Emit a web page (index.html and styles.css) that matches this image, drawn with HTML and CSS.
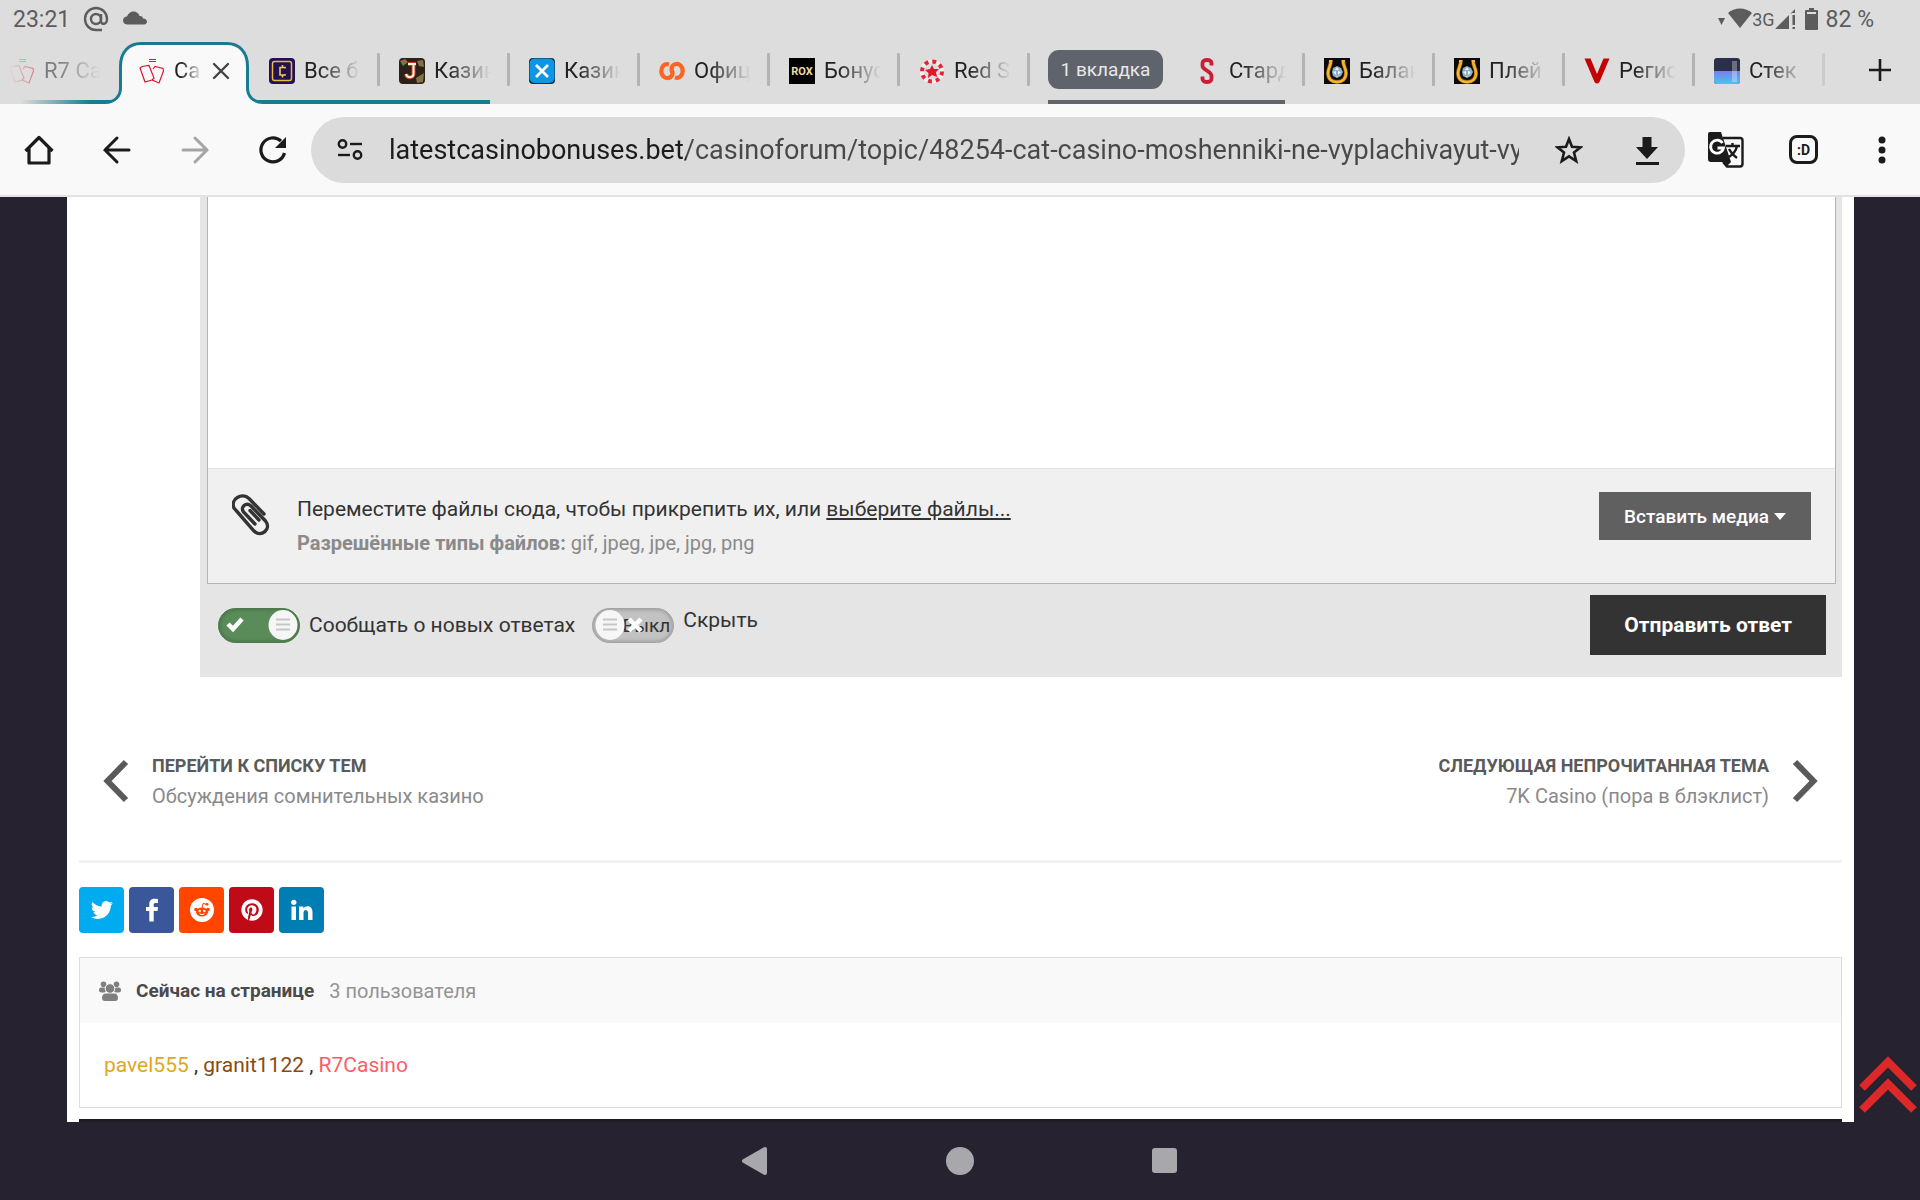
FILE: index.html
```html
<!DOCTYPE html>
<html lang="ru">
<head>
    <meta charset="utf-8">
    <title>Cat Casino</title>
    <link rel="stylesheet" href="styles.css">
</head>
<body>

    <!-- shared icons -->
    <svg class="defs" width="0" height="0">
        <symbol id="horseshoe" viewBox="0 0 26 26">
            <rect width="26" height="26" fill="#0b0a08"/>
            <path d="M7 2 C7 8 4 10 4 15 C4 21 8 24 13 24 C18 24 22 21 22 15 C22 10 19 8 19 2" fill="none" stroke="#8a5a12" stroke-width="4"/>
            <path d="M7 2 C7 8 4 10 4 15 C4 21 8 24 13 24 C18 24 22 21 22 15 C22 10 19 8 19 2" fill="none" stroke="#f5b52e" stroke-width="2.600"/>
            <path d="M5 3 H8 M18 3 H21" stroke="#f5b52e" stroke-width="2"/>
            <path d="M13 8 L17 10 L19 14 L17 18 L13 20 L9 18 L8 14 L9 10 Z" fill="#8fb0c9"/>
            <path d="M13 9 L15 12 H11 Z M9 14 L12 13 V17 Z M17 14 L14 13 V17 Z M13 18 L14 19 H12 Z" fill="#e6f3fb"/>
        </symbol>
        <symbol id="cards" viewBox="0 0 26 26">
            <g fill="none" stroke="#e0142f" stroke-width="1.200">
                <path d="M10 1.500 H17 M10 3.500 H17"/>
                <path d="M1 10 L3 8.500 L10 7.500 L15 20 L13 22 L6 24 Z"/>
                <path d="M14 11 L16 8.500 L24 10.500 L24.500 13 L20 25 L13 22"/>
            </g>
        </symbol>
    </svg>

    <div class="status">
        <span class="time">23:21</span>
        <svg width="26" height="26" viewBox="0 0 26 26" fill="none" stroke="#5c5c5c" stroke-width="2.400">
            <circle cx="13" cy="13" r="5"/>
            <path d="M18 8 V15 C18 19 24 19 24 13 A11 11 0 1 0 13 24 H19"/>
        </svg>
        <svg width="26" height="26" viewBox="0 0 26 26">
            <path d="M6 18.500 C3 18.500 1 17 1 14.500 C1 12 3 10.500 5 10.500 C6 7.500 8.500 5.500 11.500 5.500 C15 5.500 17 8 17.500 10 C19.500 9.500 21 11 21 12.500 C23.500 12.500 25 14 25 15.500 C25 17 24 18.500 22 18.500 Z" fill="#5c5c5c"/>
        </svg>
        <div class="signal">
            <svg width="34" height="22" viewBox="0 0 34 22" fill="#5c5c5c">
                <path d="M0 10 H7 L3.500 17 Z"/>
                <path d="M10 5 C16 -1 28 -1 34 5 L22 20 Z"/>
            </svg>
            <span class="net">3G</span>
            <svg width="22" height="22" viewBox="0 0 22 22" fill="#5c5c5c">
                <path d="M0 21 L14 7 V21 Z M15 6 L20 1 V5 H17 Z M17.500 7 H20 V17 H17.500 Z M17.500 19 H20 V21 H17.500 Z"/>
            </svg>
            <svg class="battery" width="13" height="22" viewBox="0 0 13 22">
                <path d="M4 0 H9 V2 H12 Q13 2 13 3 V21 Q13 22 12 22 H1 Q0 22 0 21 V3 Q0 2 1 2 H4 Z" fill="#5c5c5c"/>
                <path d="M2 4 H11 V6 H2 Z" fill="#ddd"/>
            </svg>
            <span>82 %</span>
        </div>
    </div>

    <div class="tabs">
        <div class="group teal">
            <div class="tab faded">
                <svg width="26" height="26"><use href="#cards"/></svg>
                <span class="name">R7 Ca</span>
            </div>
            <div class="tab active">
                <svg class="shape" width="166" height="62" viewBox="0 0 166 62">
                    <path d="M2 62 C14 60 19.500 54 19.500 46 V24 C19.500 10 28 1.500 40 1.500 H126 C138 1.500 146.500 10 146.500 24 V46 C146.500 54 152 60 164 62 Z" fill="#f9f9f9"/>
                    <path d="M0 60.500 H4 C14 60.500 19.500 54 19.500 46 V24 C19.500 10 28 1.500 40 1.500 H126 C138 1.500 146.500 10 146.500 24 V46 C146.500 54 152 60.500 162 60.500 H166" fill="none" stroke="#177c91" stroke-width="3"/>
                </svg>
                <svg width="26" height="26"><use href="#cards"/></svg>
                <span class="name">Ca</span>
                <button class="close" aria-label="Закрыть">
                    <svg width="18" height="18" viewBox="0 0 18 18"><path d="M2 2 L16 16 M16 2 L2 16" stroke="#444" stroke-width="2.400" stroke-linecap="round"/></svg>
                </button>
            </div>
            <div class="tab">
                <svg width="26" height="26" viewBox="0 0 26 26">
                    <rect width="26" height="26" rx="4" fill="#231152"/>
                    <rect x="3.500" y="3.500" width="19" height="19" rx="2" fill="none" stroke="#e9bb45" stroke-width="1.500"/>
                    <path d="M16 10.500 V9.500 H11 V17 H16 V16 M13.500 7 V9.500 M13.500 17 V19.500" fill="none" stroke="#f1c95a" stroke-width="1.600"/>
                </svg>
                <span class="name">Все б</span>
            </div>
            <div class="tab">
                <svg width="26" height="26" viewBox="0 0 26 26">
                    <rect width="26" height="26" rx="4" fill="#2c2118"/>
                    <path d="M1 3 L6 1 L9 4 L4 8 Z M18 3 L24 2 L25 9 L20 8 Z M17 20 L25 15 L24 24 L18 25 Z" fill="#857048"/>
                    <path d="M9 6 H17 M14.500 6 V16 C14.500 20 8 20.500 7 16" fill="none" stroke="#c2401a" stroke-width="4"/>
                    <path d="M9 6 H17 M14.500 6 V16 C14.500 20 8 20.500 7 16" fill="none" stroke="#fff4e4" stroke-width="2"/>
                </svg>
                <span class="name">Казин</span>
            </div>
        </div>
        <div class="tab">
            <svg width="26" height="26" viewBox="0 0 26 26">
                <rect width="26" height="26" rx="4" fill="#0c2b3c"/>
                <rect x="0.500" y="0.500" width="25" height="24.500" rx="5" fill="#0c96e4"/>
                <path d="M7 7 L19 19 M19 7 L7 19" stroke="#fff" stroke-width="2.800"/>
            </svg>
            <span class="name">Казин</span>
        </div>
        <div class="tab">
            <!-- two interlocked hooks -->
            <svg width="26" height="26" viewBox="0 0 26 26" fill="none" stroke="#ff6420" stroke-width="4.200">
                <path d="M10 6.500 C5 5 2.300 9 2.300 13 C2.300 18 6 20.500 9 20 C13 19.500 15 15 12 11.500"/>
                <path d="M16 19.500 C21 21 23.700 17 23.700 13 C23.700 8 20 5.500 17 6 C13 6.500 11 11 14 14.500"/>
            </svg>
            <span class="name">Офиц</span>
        </div>
        <div class="tab">
            <svg width="26" height="26" viewBox="0 0 26 26">
                <rect width="26" height="26" fill="#000"/>
                <text x="13" y="17" text-anchor="middle" class="rox">ROX</text>
            </svg>
            <span class="name">Бонус</span>
        </div>
        <div class="tab">
            <svg width="26" height="26" viewBox="0 0 26 26">
                <circle cx="13" cy="13.500" r="10" fill="none" stroke="#f8eced" stroke-width="4"/>
                <circle cx="13" cy="13.500" r="10" fill="none" stroke="#e02738" stroke-width="4" stroke-dasharray="3.900 3.950"/>
                <path d="M13 7 L15 11 L20 11 L17 14 L18 19 L13 17 L9 20 L9.500 15 L6 12 L11 11 Z" fill="#e5162c"/>
            </svg>
            <span class="name">Red S</span>
        </div>
        <div class="group slate">
            <button class="chip">1 вкладка</button>
            <div class="tab">
                <svg width="26" height="26" viewBox="0 0 26 26">
                    <path d="M17.500 7.500 V5 C17.500 1 8.500 1 8.500 5 V8 C8.500 12 17.500 13 17.500 18 V21 C17.500 25 8.500 25 8.500 21 V18.500" fill="none" stroke="#c91f35" stroke-width="3.800"/>
                </svg>
                <span class="name">Стард</span>
            </div>
        </div>
        <div class="tab">
            <svg width="26" height="26"><use href="#horseshoe"/></svg>
            <span class="name">Балан</span>
        </div>
        <div class="tab">
            <svg width="26" height="26"><use href="#horseshoe"/></svg>
            <span class="name">Плей</span>
        </div>
        <div class="tab">
            <svg width="26" height="26" viewBox="0 0 26 26"><path d="M0.500 0.500 H6.500 L13 16 L19.500 0.500 H25.500 L15.500 24 Q13 27 10.500 24 Z" fill="#c40404"/></svg>
            <span class="name">Регис</span>
        </div>
        <div class="tab last">
            <svg width="26" height="26" viewBox="0 0 26 26">
                <defs><linearGradient id="stack" x1="0" y1="0" x2="0" y2="1"><stop offset="0" stop-color="#7c7cf0"/><stop offset="1" stop-color="#45c7ea"/></linearGradient></defs>
                <rect width="26" height="26" rx="3" fill="#2b2f4b"/>
                <path d="M0 13 H26 V23 Q26 26 23 26 H3 Q0 26 0 23 Z" fill="url(#stack)"/>
                <rect x="18" y="3" width="5" height="21" fill="#fff" opacity="0.300"/>
            </svg>
            <span class="name">Стек</span>
        </div>
        <button class="new-tab" aria-label="Новая вкладка">
            <svg width="24" height="24" viewBox="0 0 24 24"><path d="M12 1 V23 M1 12 H23" stroke="#1c1c1c" stroke-width="2.600"/></svg>
        </button>
    </div>

    <div class="toolbar">
        <div class="nav">
            <button aria-label="Домой">
                <svg width="32" height="32" viewBox="0 0 32 32" fill="none" stroke="#1b1b1b" stroke-width="3.200" stroke-linejoin="round"><path d="M2.500 17 L16 3.500 L29.500 17 M6 14 V29 H26 V14"/></svg>
            </button>
            <button aria-label="Назад">
                <svg width="32" height="32" viewBox="0 0 32 32" fill="none" stroke="#1b1b1b" stroke-width="3" stroke-linecap="round"><path d="M28 16 H4 M16 4 L4 16 L16 28"/></svg>
            </button>
            <button aria-label="Вперёд">
                <svg width="32" height="32" viewBox="0 0 32 32" fill="none" stroke="#a5a5a5" stroke-width="3" stroke-linecap="round"><path d="M4 16 H28 M16 4 L28 16 L16 28"/></svg>
            </button>
            <button aria-label="Обновить">
                <svg width="32" height="32" viewBox="0 0 32 32"><path d="M24 7 A12 12 0 1 0 27.500 19" fill="none" stroke="#1b1b1b" stroke-width="3.200"/><path d="M29 3 V14 H18 Z" fill="#1b1b1b"/></svg>
            </button>
        </div>
        <div class="address">
            <svg width="26" height="22" viewBox="0 0 26 22" fill="none" stroke="#1b1b1b" stroke-width="2.400">
                <circle cx="5.500" cy="5" r="3.700"/><path d="M13 5 H25"/><circle cx="20.500" cy="16" r="3.700"/><path d="M1 16 H13"/>
            </svg>
            <input class="url" type="text" aria-label="Адрес" value="latestcasinobonuses.bet/casinoforum/topic/48254-cat-casino-moshenniki-ne-vyplachivayut-vyi">
            <button aria-label="Закладка">
                <svg width="28" height="28" viewBox="0 0 28 28"><path d="M14 3 L17 10.700 L25.500 11.300 L19 16.500 L21.200 25 L14 20.300 L6.800 25 L9 16.500 L2.500 11.300 L11 10.700 Z" fill="none" stroke="#1b1b1b" stroke-width="2.600"/></svg>
            </button>
            <button aria-label="Скачать">
                <svg width="28" height="32" viewBox="0 0 28 32"><path d="M9.500 3 H18.500 V13 H25 L14 25 L3 13 H9.500 Z M3 28 H26 V31 H3 Z" fill="#1b1b1b"/></svg>
            </button>
        </div>
        <div class="tools">
            <button aria-label="Перевести">
                <svg width="38" height="38" viewBox="0 0 38 38">
                    <path d="M16 7 H33 Q35.500 7 35.500 9.500 V33 Q35.500 35.500 33 35.500 H20 L16 31" fill="#f9f9f9" stroke="#1b1b1b" stroke-width="2.400"/>
                    <path d="M3 1 H14 L24 31 H4 Q1 31 1 28 V3 Q1 1 3 1 Z M17 31 H24 L19 36 Z" fill="#1b1b1b"/>
                    <path d="M15.500 12 A6.500 6.500 0 1 0 16.500 17 H10.500" fill="none" stroke="#fff" stroke-width="2.800"/>
                    <path d="M19 15 H33 M25.500 12 V15 M30 15 C29 20 25 24 22 26 M22 18 C24 22 27 25 30 27" fill="none" stroke="#1b1b1b" stroke-width="2.400"/>
                </svg>
            </button>
            <button class="count" aria-label="Вкладки">:D</button>
            <button aria-label="Меню">
                <svg width="40" height="28" viewBox="0 0 40 28" fill="#1b1b1b"><circle cx="20" cy="4" r="3.500"/><circle cx="20" cy="14" r="3.500"/><circle cx="20" cy="24" r="3.500"/></svg>
            </button>
        </div>
    </div>

    <div class="page">
        <div class="content">
            <form class="reply">
                <div class="editor">
                    <textarea aria-label="Ответ"></textarea>
                    <div class="attach">
                        <svg width="40" height="44" viewBox="0 0 40 44" fill="none" stroke="#333" stroke-width="3.400" stroke-linecap="round">
                            <path d="M32 22 L17 6.500 C10 0 -2 7 2 16 L22 39 C29 46 40 37 33.500 29 L19 14 C14 9.500 8 15 11.500 20 L23 32"/>
                            <path d="M27 28 L18 18.500"/>
                        </svg>
                        <div class="attach-text">
                            <p>Переместите файлы сюда, чтобы прикрепить их, или <a href="#">выберите файлы...</a></p>
                            <p class="types"><b>Разрешённые типы файлов:</b> gif, jpeg, jpe, jpg, png</p>
                        </div>
                        <button type="button" class="media">Вставить медиа
                            <svg width="12" height="7" viewBox="0 0 12 7"><path d="M0 0 H12 L6 7 Z" fill="#fff"/></svg>
                        </button>
                    </div>
                </div>
                <div class="actions">
                    <div class="option">
                        <span class="toggle">
                            <input type="checkbox" id="notify" checked>
                            <svg class="knob" width="82" height="35" viewBox="0 0 82 35">
                                <path d="M10 16 L15 21 L24 11" fill="none" stroke="#fff" stroke-width="4.500"/>
                                <ellipse cx="65" cy="17" rx="14.500" ry="15" fill="#f6f6f6"/>
                                <path d="M58 11.500 H72 M58 16.500 H72 M58 21.500 H72" stroke="#c6c6c6" stroke-width="2"/>
                            </svg>
                        </span>
                        <label for="notify">Сообщать о новых ответах</label>
                    </div>
                    <div class="option hide">
                        <span class="toggle">
                            <input type="checkbox" id="hide">
                            <span class="off">Выкл</span>
                            <svg class="knob" width="82" height="35" viewBox="0 0 82 35">
                                <path d="M37 11 L49 23 M49 11 L37 23" stroke="#fff" stroke-width="4.500"/>
                                <ellipse cx="18" cy="17" rx="14.500" ry="15" fill="#f6f6f6"/>
                                <path d="M11 11.500 H25 M11 16.500 H25 M11 21.500 H25" stroke="#c6c6c6" stroke-width="2"/>
                            </svg>
                        </span>
                        <label for="hide">Скрыть</label>
                    </div>
                    <button type="submit" class="send">Отправить ответ</button>
                </div>
            </form>

            <div class="pager">
                <a href="#">
                    <svg width="26" height="44" viewBox="0 0 26 44"><path d="M23 3 L4.500 22 L23 41" fill="none" stroke="#5a5a5a" stroke-width="6"/></svg>
                    <span class="pager-text">
                        <span class="pager-title">Перейти к списку тем</span>
                        <span class="pager-sub">Обсуждения сомнительных казино</span>
                    </span>
                </a>
                <a href="#" class="next">
                    <span class="pager-text">
                        <span class="pager-title">Следующая непрочитанная тема</span>
                        <span class="pager-sub">7K Casino (пора в блэклист)</span>
                    </span>
                    <svg width="26" height="44" viewBox="0 0 26 44"><path d="M3 3 L21.500 22 L3 41" fill="none" stroke="#5a5a5a" stroke-width="6"/></svg>
                </a>
            </div>

            <div class="share">
                <a href="#" class="twitter" aria-label="Twitter">
                    <svg width="22" height="22" viewBox="0 0 24 24"><path fill="#fff" d="M23.950 4.570a10 10 0 0 1-2.820.770 4.960 4.960 0 0 0 2.160-2.720c-.950.550-2 .960-3.130 1.180a4.920 4.920 0 0 0-8.380 4.480C7.690 8.090 4.070 6.130 1.640 3.160a4.920 4.920 0 0 0 1.520 6.570 4.900 4.900 0 0 1-2.230-.610v.060a4.920 4.920 0 0 0 3.950 4.830 5 5 0 0 1-2.210.080 4.940 4.940 0 0 0 4.600 3.420A9.870 9.870 0 0 1 0 19.540a13.940 13.940 0 0 0 7.550 2.210c9.050 0 14-7.500 14-13.980l-.020-.630a9.940 9.940 0 0 0 2.420-2.570z"/></svg>
                </a>
                <a href="#" class="facebook" aria-label="Facebook">
                    <svg width="22" height="24" viewBox="0 0 22 24"><path fill="#fff" d="M17 1 V5 H14.500 C13 5 12.700 5.800 12.700 7 V9 H17 L16.500 13 H12.700 V23.500 H8.300 V13 H5 V9 H8.300 V6 C8.300 2.600 10.500 0.800 13.700 0.800 Z"/></svg>
                </a>
                <a href="#" class="reddit" aria-label="Reddit">
                    <svg width="24" height="24" viewBox="0 0 24 24">
                        <circle cx="12" cy="12" r="12" fill="#fff"/>
                        <ellipse cx="12" cy="14" rx="6" ry="4.500" fill="#ff4500"/>
                        <circle cx="6" cy="11.500" r="1.800" fill="#ff4500"/><circle cx="18" cy="11.500" r="1.800" fill="#ff4500"/>
                        <path d="M12 10 L13 5.500 L16.500 6.200" fill="none" stroke="#ff4500"/>
                        <circle cx="17" cy="6.300" r="1.400" fill="#ff4500"/>
                        <circle cx="9.700" cy="13" r="1.200" fill="#fff"/><circle cx="14.300" cy="13" r="1.200" fill="#fff"/>
                        <path d="M9.500 15.800 Q12 17.500 14.500 15.800" fill="none" stroke="#fff"/>
                    </svg>
                </a>
                <a href="#" class="pinterest" aria-label="Pinterest">
                    <svg width="22" height="22" viewBox="0 0 496 512"><path fill="#fff" d="M496 256c0 137-111 248-248 248-25.600 0-50.200-3.900-73.400-11.100 10.100-16.500 25.200-43.500 30.800-65 3-11.600 15.400-59 15.400-59 8.100 15.400 31.700 28.500 56.800 28.500 74.800 0 128.700-68.800 128.700-154.300 0-81.900-66.900-143.200-152.900-143.200-107 0-163.900 71.800-163.900 150.100 0 36.400 19.400 81.700 50.300 96.100 4.700 2.200 7.200 1.200 8.300-3.300.8-3.400 5-20.300 6.900-28.100.6-2.500.3-4.700-1.700-7.100-10.100-12.500-18.300-35.300-18.300-56.600 0-54.700 41.400-107.600 112-107.600 60.900 0 103.600 41.500 103.600 100.900 0 67.100-33.900 113.600-78 113.600-24.300 0-42.600-20.100-36.700-44.800 7-29.500 20.500-61.300 20.500-82.600 0-19-10.200-34.900-31.400-34.900-24.900 0-44.900 25.700-44.900 60.200 0 22 7.400 36.800 7.400 36.800s-24.500 103.800-29 123.200c-5 21.400-3 51.600-.9 71.200C65.400 450.900 0 361.100 0 256 0 119 111 8 248 8s248 111 248 248z"/></svg>
                </a>
                <a href="#" class="linkedin" aria-label="LinkedIn">
                    <svg width="22" height="22" viewBox="0 0 22 22"><path fill="#fff" d="M0.500 7.500 H5 V21 H0.500 Z M8 7.500 H12.300 V9.300 C14.500 6 21.500 6 21.500 13 V21 H17 V14 C17 10 12.500 10 12.500 14 V21 H8 Z"/><circle cx="2.800" cy="3.300" r="2.600" fill="#fff"/></svg>
                </a>
            </div>

            <div class="online">
                <h3>
                    <svg width="22" height="20" viewBox="0 0 22 20" fill="#7f7f7f">
                        <circle cx="4.500" cy="3.200" r="2.800"/><circle cx="17.500" cy="3.200" r="2.800"/>
                        <rect x="0" y="6.500" width="7" height="5" rx="2.300"/><rect x="15" y="6.500" width="7" height="5" rx="2.300"/>
                        <circle cx="11" cy="7.500" r="4.800" stroke="#f9f9f9" stroke-width="1"/>
                        <path d="M3 17 Q3 12.500 7 12.500 H15 Q19 12.500 19 17 Q19 20 16 20 H6 Q3 20 3 17 Z"/>
                    </svg>
                    Сейчас на странице
                    <span>3 пользователя</span>
                </h3>
                <p><a href="#" class="gold">pavel555</a> , <a href="#" class="brown">granit1122</a> , <a href="#" class="rose">R7Casino</a></p>
            </div>
            <div class="cut"></div>
        </div>
        <a href="#" class="to-top" aria-label="Наверх">
            <svg width="58" height="58" viewBox="0 0 58 58"><path d="M3 32 L29 6 L55 32 M3 54 L29 28 L55 54" fill="none" stroke="#dc2828" stroke-width="8"/></svg>
        </a>
    </div>

    <div class="android">
        <button aria-label="Назад"><svg width="28" height="30" viewBox="0 0 28 30"><path d="M3 15 L24 3 V27 Z" fill="#a8a7ac" stroke="#a8a7ac" stroke-width="4" stroke-linejoin="round"/></svg></button>
        <button aria-label="Домой"><svg width="28" height="28" viewBox="0 0 28 28"><circle cx="14" cy="14" r="14" fill="#a8a7ac"/></svg></button>
        <button aria-label="Обзор"><svg width="28" height="28" viewBox="0 0 28 28"><rect x="1" y="1" width="25" height="25" rx="3" fill="#a8a7ac"/></svg></button>
    </div>

</body>
</html>
```
FILE: styles.css
```css
* {
    box-sizing: border-box;
}

body {
    display: flex;
    flex-direction: column;
    min-height: 100vh;
    margin: 0;
    overflow-x: hidden;
    background-color: #26222f;
    font-family: Roboto, "Liberation Sans", sans-serif;
    font-size: 21px;
    color: #333;
}

button {
    display: flex;
    align-items: center;
    justify-content: center;
    padding: 0;
    border: 0;
    background: none;
    font-family: inherit;
    cursor: pointer;
}

a {
    color: inherit;
    text-decoration: none;
}

p, h3 {
    margin: 0;
}

svg {
    flex: none;
}

.defs {
    position: absolute;
}

/* status bar */
.status {
    display: flex;
    align-items: center;
    gap: 13px;
    height: 42px;
    padding: 0 46px 4px 13px;
    background-color: #ddd;
    color: #5c5c5c;
    font-size: 23px;
}

.signal {
    display: flex;
    align-items: center;
    margin-left: auto;
}

.net {
    font-size: 18px;
}

.battery {
    margin: 0 8px;
}

/* tab strip */
.tabs {
    display: flex;
    height: 62px;
    padding-right: 24px;
    background-color: #ddd;
    overflow: hidden;
}

.group {
    display: flex;
    flex: none;
    position: relative;
}

.group::after {
    content: "";
    position: absolute;
    left: 0;
    right: 20px;
    bottom: 0;
    height: 4px;
}

.teal {
    margin-left: -10px;
}

.teal::after {
    left: 30px;
    background: linear-gradient(to right, #ddd, #177c91 70px);
}

.slate::after {
    left: 18px;
    background-color: #5f636b;
}

.tab {
    display: flex;
    flex: none;
    align-items: center;
    gap: 9px;
    position: relative;
    width: 130px;
    padding: 0 18px 5px 19px;
}

.tab::after {
    content: "";
    position: absolute;
    top: 11px;
    right: 0;
    width: 3px;
    height: 33px;
    border-radius: 1px;
    background-color: #b3b3b3;
}

.name {
    flex: 1;
    min-width: 0;
    overflow: hidden;
    white-space: nowrap;
    font-size: 22px;
    line-height: 32px;
    color: #222;
    mask-image: linear-gradient(to right, #000 25%, transparent 98%);
}

.faded .name, .faded svg {
    opacity: 0.5;
}

.faded svg {
    mask-image: linear-gradient(to right, transparent, #000);
}

.faded::after, .active::after {
    display: none;
}

.last::after {
    opacity: 0.4;
}

.active {
    z-index: 1;
    padding-right: 20px;
}

.active svg, .active .name, .active .close {
    position: relative;
}

.active .shape {
    position: absolute;
    top: 0;
    left: -19px;
}

.rox {
    font-size: 11px;
    font-weight: bold;
    fill: #f0d9a8;
}

.chip {
    align-self: flex-start;
    width: 115px;
    height: 39px;
    margin: 8px 12px 0 18px;
    border-radius: 11px;
    background-color: #5f636b;
    color: #e8e8e8;
    font-size: 19px;
}

.new-tab {
    margin-left: auto;
    padding: 0 4px 7px;
}

/* toolbar */
.toolbar {
    display: flex;
    align-items: center;
    gap: 22px;
    height: 93px;
    padding: 0 18px 0 23px;
    border-bottom: 2px solid #e2e2e2;
    background-color: #f9f9f9;
}

.nav {
    display: flex;
    gap: 46px;
}

.tools {
    display: flex;
    align-items: center;
    gap: 44px;
}

.address {
    display: flex;
    flex: 1;
    align-items: center;
    gap: 26px;
    height: 66px;
    padding: 0 24px 0 26px;
    border-radius: 33px;
    background-color: #dbdbdb;
}

/* the host part of the address is darker than the path */
.url {
    flex: 1;
    min-width: 0;
    height: 44px;
    margin-right: 10px;
    padding: 0;
    border: 0;
    outline: 0;
    background: linear-gradient(to right, #1b1b1b 297px, #484848 297px);
    background-clip: text;
    -webkit-background-clip: text;
    -webkit-text-fill-color: transparent;
    font-family: inherit;
    font-size: 27px;
}

.address button + button {
    margin-left: 24px;
}

.count {
    width: 29px;
    height: 29px;
    border: 3px solid #1b1b1b;
    border-radius: 8px;
    color: #1b1b1b;
    font-size: 14px;
    font-weight: bold;
}

/* forum page */
.page {
    flex: 1;
    position: relative;
    padding: 0 66px 0 67px;
}

.content {
    padding: 0 12px;
    background-color: #fff;
}

.reply {
    margin-left: 121px;
    padding: 0 6px 22px 7px;
    background-color: #e5e5e5;
}

.editor {
    border: 1px solid #b4b4b4;
    border-top: 0;
}

.editor textarea {
    display: block;
    width: 100%;
    height: 271px;
    padding: 16px;
    border: 0;
    outline: 0;
    resize: none;
    font-family: inherit;
    font-size: 21px;
}

.attach {
    display: flex;
    align-items: flex-start;
    gap: 25px;
    padding: 23px 24px;
    border-top: 1px solid #e2e2e2;
    background-color: #f0f0f0;
}

.attach-text {
    flex: 1;
    line-height: 34px;
}

.attach-text a {
    text-decoration: underline;
}

.types {
    color: #8a8a8a;
    font-size: 20px;
}

.media {
    gap: 5px;
    height: 48px;
    padding: 0 25px;
    background-color: #606060;
    color: #fff;
    font-size: 19px;
    font-weight: 500;
}

.actions {
    display: flex;
    align-items: center;
    gap: 17px;
    padding: 11px 10px 0 11px;
}

.option {
    display: flex;
    align-items: center;
    gap: 9px;
}

.hide label {
    padding-bottom: 10px;
}

.toggle {
    position: relative;
    height: 35px;
}

.toggle input {
    display: block;
    appearance: none;
    width: 82px;
    height: 35px;
    margin: 0;
    border: 1px solid #a3a3a3;
    border-radius: 18px;
    background-color: #c2c2c2;
    box-shadow: inset 0 0 4px rgba(0, 0, 0, 0.3);
}

.toggle input:checked {
    border-color: #4b7a4b;
    background-color: #5a8c5a;
}

.knob {
    position: absolute;
    top: 0;
    left: 0;
    pointer-events: none;
}

.off {
    position: absolute;
    top: 6px;
    right: 4px;
    font-size: 19px;
    line-height: 24px;
}

.send {
    height: 60px;
    margin-left: auto;
    padding: 0 34px;
    background-color: #333;
    color: #fff;
    font-size: 21px;
    font-weight: bold;
}

.pager {
    display: flex;
    justify-content: space-between;
    padding: 74px 24px 43px;
    border-bottom: 3px solid #f2f2f2;
}

.pager a {
    display: flex;
    align-items: center;
    gap: 23px;
    padding-bottom: 6px;
}

.pager-text {
    display: flex;
    flex-direction: column;
    line-height: 30px;
}

.pager-title {
    color: #5a5a5a;
    font-size: 18px;
    font-weight: bold;
    text-transform: uppercase;
}

.pager-sub {
    color: #8a8a8a;
    font-size: 20px;
}

.next {
    text-align: right;
}

.share {
    display: flex;
    gap: 5px;
    padding: 24px 0;
}

.share a {
    display: flex;
    align-items: center;
    justify-content: center;
    width: 45px;
    height: 46px;
    border-radius: 4px;
}

.twitter { background-color: #00abf0; }
.facebook { background-color: #3a579a; }
.reddit { background-color: #ff4500; }
.pinterest { background-color: #c00a18; }
.linkedin { background-color: #007eb3; }

.online {
    border: 1px solid #ddd;
}

.online h3 {
    display: flex;
    align-items: center;
    gap: 15px;
    height: 65px;
    padding: 0 19px;
    background-color: #f9f9f9;
    color: #4a4a4a;
    font-size: 19px;
}

.online h3 span {
    color: #949494;
    font-size: 20px;
    font-weight: normal;
}

.online p {
    padding: 24px;
    line-height: 36px;
}

.gold { color: #dfa822; }
.brown { color: #8b4a10; }
.rose { color: #ff5c66; }

.cut {
    height: 3px;
    margin-top: 11px;
    background-color: #1d1c25;
}

.to-top {
    position: absolute;
    right: 3px;
    bottom: 8px;
    height: 58px;
}

/* system navigation */
.android {
    display: flex;
    align-items: center;
    justify-content: center;
    gap: 177px;
    height: 78px;
}
```
